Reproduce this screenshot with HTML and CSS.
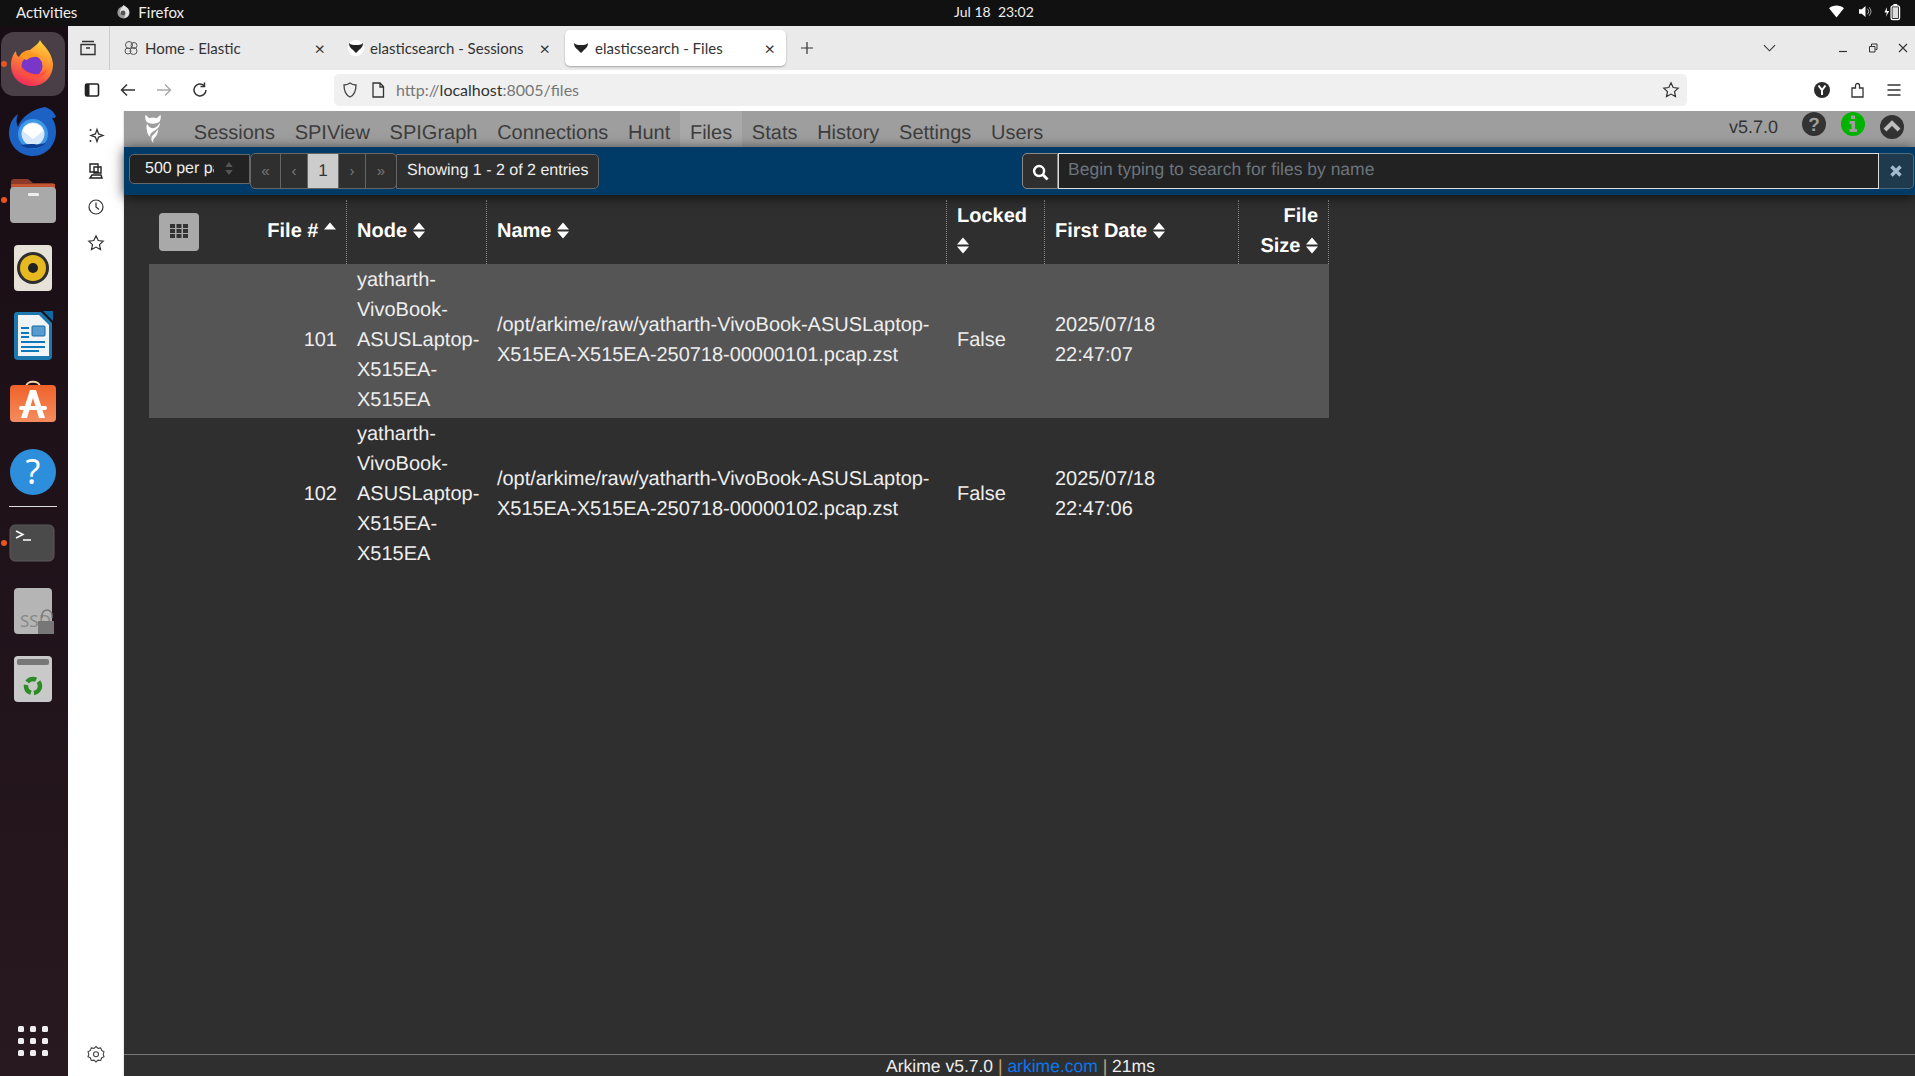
FILE: index.html
```html
<!DOCTYPE html>
<html lang="en">
<head>
<meta charset="utf-8">
<title>elasticsearch - Files</title>
<link rel="stylesheet" href="styles.css">
</head>
<body>
<header class="topbar">
  <span class="activities">Activities</span>
  <span class="appname">
    <svg class="appname-icon" viewBox="0 0 16 16"><circle cx="8" cy="9" r="6.5" fill="#9a9a9a"/><path d="M8 1c3 2 6 4 6 8a6 6 0 0 1-6 6c2-2 3-4 1-6-2-1-4 0-5 1 0-4 2-6 4-9z" fill="#e4e4e4"/><circle cx="7.5" cy="9.5" r="2.6" fill="#555"/></svg>
    Firefox
  </span>
  <span class="clock">Jul 18&nbsp; 23:02</span>
  <span class="status">
    <svg class="st-wifi" viewBox="0 0 16 14"><path d="M0 3.5C2 1.5 5 .5 8 .5s6 1 8 3L8 13.5z" fill="#fff"/></svg>
    <svg class="st-vol" viewBox="0 0 16 14"><path d="M1 4.5h3L8 1v12L4 9.500H1z" fill="#fff"/><path d="M10 4a4 4 0 0 1 0 6M12 2.500a7 7 0 0 1 0 9" fill="none" stroke="#bbb" stroke-width="1"/></svg>
    <svg class="st-bat" viewBox="0 0 18 18"><path d="M3 4 .5 9.500H3L2 14l3.500-6H3z" fill="#fff"/><rect x="7.500" y="2.500" width="9" height="14.500" rx="2" fill="none" stroke="#fff" stroke-width="1.300"/><rect x="10" y=".5" width="4" height="2" fill="#fff"/><rect x="9" y="4" width="6" height="11.500" fill="#ddd"/></svg>
  </span>
</header>

<div class="desktop">
  <nav class="dock">
    <div class="slot">
      <span class="run-dot"></span>
      <div class="tile">
        <svg class="ico-52" viewBox="0 2 52 52">
          <defs><linearGradient id="ffa" x1="0.7" y1="0" x2="0.3" y2="1"><stop offset="0" stop-color="#ffd43a"/><stop offset=".45" stop-color="#ff8a2f"/><stop offset="1" stop-color="#f0265e"/></linearGradient></defs>
          <path d="M33 4c2 5 12 11 13 24 0 13-9 22-21 22C13 50 4 41 4 29c0-6 2-11 5-14 0 3 1 5 3 6 2-4 6-7 11-7 3-3 8-5 10-10z" fill="url(#ffa)"/>
          <circle cx="25" cy="30" r="10.500" fill="#7a35c9"/>
          <path d="M14 18c6-3 15-2 20 3-5-1-12 0-14 3-3 0-5-3-6-6z" fill="#ff9a1f"/>
          <path d="M14 30c0 8 5 13 12 13 6 0 11-3 14-10-3 4-8 6-13 5-6-1-10-4-13-8z" fill="#ff4f3e"/>
        </svg>
      </div>
    </div>
    <div class="slot">
      <svg class="ico-52" viewBox="0 1 52 52">
        <path d="M38 2c5 2 9 4 11 10-1 1-3 1-4 1 3 4 4 9 4 14 0 13-10 24-23 24S2 41 2 28c0-8 3-15 9-19-2 5-2 9 0 13C14 12 26 4 38 2z" fill="#1c62c4"/>
        <circle cx="26" cy="29" r="15" fill="#3f97e8"/>
        <circle cx="26" cy="29" r="11.500" fill="#d8e8fa"/>
        <path d="M16 26l10 8 10-8v-1a11 11 0 0 0-20 0z" fill="#fff"/>
        <path d="M14 40c6 5 18 5 25-2-5 1-9 2-12 1-5 0-9 0-13 1z" fill="#0d3f95"/>
      </svg>
    </div>
    <div class="slot">
      <span class="run-dot"></span>
      <svg class="ico-52" viewBox="0 0 52 52">
        <path d="M4 8a3 3 0 0 1 3-3h14l5 4h19a3 3 0 0 1 3 3v20H4z" fill="#8e3a2b"/>
        <rect x="4" y="10" width="44" height="4" fill="#c2552f"/>
        <rect x="3" y="13" width="46" height="36" rx="4" fill="#a9a9a9"/>
        <rect x="21" y="19" width="11" height="3" rx="1" fill="#eee"/>
      </svg>
    </div>
    <div class="slot">
      <svg class="ico-52" viewBox="0 0 52 52">
        <rect x="7" y="3" width="38" height="46" rx="4" fill="#e6e2d7"/>
        <circle cx="26" cy="26" r="16" fill="#2e2e2e"/>
        <circle cx="26" cy="26" r="13" fill="#e7b921"/>
        <circle cx="26" cy="26" r="5" fill="#222"/>
      </svg>
    </div>
    <div class="slot">
      <svg class="ico-52" viewBox="0 0 52 52">
        <path d="M10 2h24l11 11v33a4 4 0 0 1-4 4H11a4 4 0 0 1-4-4V5a3 3 0 0 1 3-3z" fill="#1d78b0"/>
        <path d="M36 1h10v10z" fill="#0f6aa4"/>
        <path d="M11 5h21l10 10v31H11z" fill="#f1f4f6"/>
        <path d="M14 17h8v2h-8zM14 22h8v2h-8zM14 26h8v2h-8zM14 31h24v2H14zM14 36h24v2H14zM14 40h18v2H14z" fill="#0f78bd"/>
        <rect x="25" y="16" width="13" height="10" rx="1" fill="#5a9bcf" stroke="#0f6aa4"/>
      </svg>
    </div>
    <div class="slot">
      <svg class="ico-52" viewBox="0 -1 52 52">
        <defs><linearGradient id="bag" x1="0" y1="0" x2="0" y2="1"><stop offset="0" stop-color="#f0622a"/><stop offset="1" stop-color="#f58c5e"/></linearGradient></defs>
        <path d="M19 8c0-7 14-7 14 0" fill="none" stroke="#f4d5a7" stroke-width="2"/>
        <rect x="3" y="6" width="46" height="37" rx="4" fill="url(#bag)"/>
        <path d="M23 11h6l9 28h-6l-6-20-6 20h-6z" fill="#fff"/>
        <rect x="12" y="27" width="28" height="4" rx="2" fill="#fff"/>
      </svg>
    </div>
    <div class="slot">
      <svg class="ico-52" viewBox="0 0 52 52">
        <circle cx="26" cy="26" r="23" fill="#2d8fdc"/>
        <text x="26" y="38" class="help-q">?</text>
      </svg>
    </div>
    <div class="dock-sep"></div>
    <div class="slot">
      <span class="run-dot"></span>
      <svg class="ico-52" viewBox="0 0 52 52">
        <rect x="3" y="8" width="44" height="36" rx="5" fill="#4a4a4a" stroke="#5a5a5a"/>
        <path d="M9 14l7 3.500-7 3.500M16 23h8" fill="none" stroke="#fff" stroke-width="1.500"/>
      </svg>
    </div>
    <div class="slot">
      <svg class="ico-52" viewBox="0 0 52 52">
        <rect x="7" y="3" width="38" height="46" rx="4" fill="#b5b5b5"/>
        <text x="13" y="42" class="ssd-label">SSD</text>
        <path d="M35 33v-3a5 5 0 0 1 10 0v3" fill="none" stroke="#777" stroke-width="1.500"/>
        <rect x="31" y="36" width="16" height="13" fill="#777"/>
      </svg>
    </div>
    <div class="slot">
      <svg class="ico-52" viewBox="0 0 52 52">
        <rect x="7" y="3" width="38" height="46" rx="4" fill="#c9c9c9"/>
        <rect x="10" y="6" width="32" height="6" rx="2" fill="#777"/>
        <circle cx="26" cy="33" r="7" fill="none" stroke="#2a8c22" stroke-width="4.500" stroke-dasharray="10 3"/>
      </svg>
    </div>
    <div class="app-grid">
      <i></i><i></i><i></i><i></i><i></i><i></i><i></i><i></i><i></i>
    </div>
  </nav>

  <div class="window">
    <div class="tabstrip">
      <span class="tb-icon tab-manager">
        <svg viewBox="0 0 18 18" class="ico-18"><path d="M3 2.500h12M2 5.500h14v10H2zM7 9h4" fill="none" stroke="#333" stroke-width="1.400"/></svg>
      </span>
      <span class="tabstrip-sep"></span>
      <div class="tab">
        <svg class="fav" viewBox="0 0 16 16"><g fill="none" stroke="#555" stroke-width="1"><circle cx="6" cy="5" r="3.500"/><circle cx="11" cy="5.500" r="3"/><circle cx="5" cy="11" r="3"/><circle cx="10.500" cy="11" r="3.500"/></g></svg>
        <span class="tab-title">Home - Elastic</span>
        <span class="tab-x">×</span>
      </div>
      <div class="tab">
        <svg class="fav" viewBox="0 0 16 16"><circle cx="8" cy="8" r="8" fill="#fff"/><path d="M1 3c2 2 4 2 7 2s5 0 7-2c0 4-2 5-4 7l-3 3-3-3C3 8 1 7 1 3z" fill="#222"/></svg>
        <span class="tab-title">elasticsearch - Sessions</span>
        <span class="tab-x">×</span>
      </div>
      <div class="tab tab-active">
        <svg class="fav" viewBox="0 0 16 16"><path d="M1 3c2 2 4 2 7 2s5 0 7-2c0 4-2 5-4 7l-3 3-3-3C3 8 1 7 1 3z" fill="#222"/></svg>
        <span class="tab-title">elasticsearch - Files</span>
        <span class="tab-x">×</span>
      </div>
      <svg class="new-tab" viewBox="0 0 14 14"><path d="M7 1v12M1 7h12" stroke="#333" stroke-width="1.200"/></svg>
      <div class="strip-right">
        <svg class="strip-chev" viewBox="0 0 14 8"><path d="M1 1l6 6 6-6" fill="none" stroke="#333" stroke-width="1.200"/></svg>
        <svg class="win-btn" viewBox="0 0 10 10"><path d="M1 8.500h8" stroke="#333" stroke-width="1.200"/></svg>
        <svg class="win-btn" viewBox="0 0 10 10"><path d="M1.500 3.500h5.500V9H1.500zM3.500 3V1H9v5.500H7.500" fill="none" stroke="#333"/></svg>
        <svg class="win-btn" viewBox="0 0 10 10"><path d="M1 1l8 8M9 1l-8 8" stroke="#333" stroke-width="1.100"/></svg>
      </div>
    </div>

    <div class="toolbar">
      <svg class="ico-18 tool tool-first" viewBox="0 0 18 18"><rect x="2.500" y="3" width="13" height="12" rx="1.500" fill="none" stroke="#222" stroke-width="1.600"/><rect x="2.500" y="3" width="4" height="12" fill="#222"/></svg>
      <svg class="ico-18 tool" viewBox="0 0 18 18"><path d="M16 9H3M8 3.500 2.500 9 8 14.500" fill="none" stroke="#333" stroke-width="1.500"/></svg>
      <svg class="ico-18 tool" viewBox="0 0 18 18"><path d="M2 9h13M10 3.500 15.500 9 10 14.500" fill="none" stroke="#aaa" stroke-width="1.500"/></svg>
      <svg class="ico-18 tool" viewBox="0 0 18 18"><path d="M15 9a6 6 0 1 1-2-4.500M13.500 1.500v4h-4" fill="none" stroke="#333" stroke-width="1.500"/></svg>
      <div class="urlbar">
        <svg class="ico-18 url-shield" viewBox="0 0 18 18"><path d="M9 2c2 1.500 4 2 6 2 0 6-1.500 10-6 12C4.500 14 3 10 3 4c2 0 4-.5 6-2z" fill="none" stroke="#444" stroke-width="1.300"/></svg>
        <svg class="url-page" viewBox="0 0 14 16"><path d="M2 1h7l3.500 3.500V15H2zM9 1v4h3.500" fill="none" stroke="#333" stroke-width="1.300"/></svg>
        <span class="url-text">http://<b>localhost</b>:8005/files</span>
        <svg class="ico-18 url-star" viewBox="0 0 18 18"><path d="M9 1.800l2.200 4.700 5 .6-3.700 3.500 1 5L9 13.100l-4.500 2.500 1-5L1.800 7.100l5-.6z" fill="none" stroke="#333" stroke-width="1.200"/></svg>
      </div>
      <div class="tool-right">
        <svg class="ico-18" viewBox="0 0 18 18"><circle cx="9" cy="9" r="8" fill="#2b2b2b"/><path d="M5.500 4.500 9 9l3.500-4.500M9 9v5" fill="none" stroke="#fff" stroke-width="2"/></svg>
        <svg class="ico-18" viewBox="0 0 18 18"><path d="M3 16V7h3.500V4.500a2 2 0 0 1 4 0V7H14v3.500a2 2 0 0 1 0 1.500V16z" fill="none" stroke="#333" stroke-width="1.300"/></svg>
        <svg class="ico-18" viewBox="0 0 18 18"><path d="M2.500 4h13M2.500 9h13M2.500 14h13" stroke="#333" stroke-width="1.300"/></svg>
      </div>
    </div>

    <div class="browser-body">
      <aside class="sidebar">
        <svg class="ico-18 side-ico" viewBox="0 0 18 18"><path d="M10 3.500l1.600 4.400 4.400 1.600-4.400 1.600L10 15.500l-1.600-4.400L4 9.500l4.400-1.600z" fill="none" stroke="#333" stroke-width="1.300"/><circle cx="3.500" cy="4" r="1" fill="#333"/><circle cx="3.500" cy="15" r="1" fill="#333"/></svg>
        <svg class="ico-18 side-ico" viewBox="0 0 18 18"><path d="M3 2h8v8H3zM7 5h7v6H7zM5 13h9l1 3H3z" fill="none" stroke="#222" stroke-width="1.400"/></svg>
        <svg class="ico-18 side-ico" viewBox="0 0 18 18"><circle cx="9" cy="9" r="7" fill="none" stroke="#333" stroke-width="1.200"/><path d="M9 4.500V9l3 2.500" fill="none" stroke="#333" stroke-width="1.200"/></svg>
        <svg class="ico-18 side-ico" viewBox="0 0 18 18"><path d="M9 1.800l2.200 4.700 5 .6-3.700 3.500 1 5L9 13.100l-4.500 2.500 1-5L1.800 7.100l5-.6z" fill="none" stroke="#333" stroke-width="1.200"/></svg>
        <svg class="ico-18 side-ico side-gear" viewBox="0 0 18 18"><path d="M9 1.500l2 1.800 2.700-.4.900 2.500 2.400 1.300-.8 2.500.8 2.500-2.400 1.300-.9 2.500-2.700-.4-2 1.800-2-1.800-2.700.4-.9-2.500L1 11.700l.8-2.500L1 6.700l2.400-1.300.9-2.500 2.700.4z" fill="none" stroke="#444" stroke-width="1.100"/><circle cx="9" cy="9.200" r="2.500" fill="none" stroke="#444" stroke-width="1.100"/></svg>
      </aside>

      <main class="app">
        <div class="navbar">
          <svg class="logo" viewBox="0 0 24 40">
            <path d="M2 1l5 4.500c3-1 7-1 10 0L22 1c1 4 0 8-2 10-4 2.500-12 2.500-16 0C2 9 1 5 2 1z" fill="#fff"/>
            <path d="M4 13c2 4 5 6 8 6s7-3 9-7c1 4-3 8-8 11-4 2-6 5-4 8-3-2-5-5-5-9-1-3-1-6 0-9z" fill="#fff"/>
            <path d="M19 20c0 6-3 10-6 13-1 2-1 4 0 6-3-2-4-5-3-8 1-3 6-6 9-11z" fill="#fff"/>
          </svg>
          <a class="nav-link">Sessions</a>
          <a class="nav-link">SPIView</a>
          <a class="nav-link">SPIGraph</a>
          <a class="nav-link">Connections</a>
          <a class="nav-link">Hunt</a>
          <a class="nav-link nav-active">Files</a>
          <a class="nav-link">Stats</a>
          <a class="nav-link">History</a>
          <a class="nav-link">Settings</a>
          <a class="nav-link">Users</a>
          <div class="nav-right">
            <span class="version">v5.7.0</span>
            <svg class="nav-ico nav-ico-help" viewBox="0 0 24 24"><circle cx="12" cy="12" r="12" fill="#333"/><text x="12" y="18.500" class="nav-q">?</text></svg>
            <svg class="nav-ico nav-ico-info" viewBox="0 0 24 24"><circle cx="12" cy="12" r="12" fill="#00b300"/><path d="M10 3.500h4v3.500h-4zM8.500 9h5.500v8h2v3H8.500v-3h2v-5h-2z" fill="#9e9e9e"/></svg>
            <svg class="nav-ico nav-ico-up" viewBox="0 0 24 24"><circle cx="12" cy="12" r="12" fill="#333"/><path d="M5 15l7-7 7 7" fill="none" stroke="#bdbdbd" stroke-width="4"/></svg>
          </div>
        </div>

        <div class="subbar">
          <div class="per-page">
            <span class="per-page-text">500 per page</span>
            <svg class="per-page-arrows" viewBox="0 0 10 16"><path d="M5 1l4 5.500H1zM5 15 1 9.500h8z" fill="#555"/></svg>
          </div>
          <div class="pager">
            <span class="pg pg-w1">«</span>
            <span class="pg pg-w2">‹</span>
            <span class="pg pg-on">1</span>
            <span class="pg pg-w2">›</span>
            <span class="pg pg-w1">»</span>
          </div>
          <div class="showing">Showing 1 - 2 of 2 entries</div>
          <div class="search">
            <span class="search-btn"><svg class="search-ico" viewBox="0 0 18 18"><circle cx="7.500" cy="7.500" r="5.300" fill="none" stroke="#fff" stroke-width="2.600"/><path d="M11.500 11.500l5 5" stroke="#fff" stroke-width="3"/></svg></span>
            <span class="search-input">Begin typing to search for files by name</span>
            <span class="search-clear"><svg class="clear-ico" viewBox="0 0 14 14"><path d="M2.500 2.500l9 9M11.500 2.500l-9 9" stroke="#a3bccd" stroke-width="3.400"/></svg></span>
          </div>
        </div>

        <div class="content">
          <table class="files">
            <colgroup>
              <col class="c-num"><col class="c-node"><col class="c-name"><col class="c-lock"><col class="c-date"><col class="c-size">
            </colgroup>
            <thead>
              <tr>
                <th class="right">
                  <div class="first-head">
                    <span class="grid-btn"><svg class="grid-ico" viewBox="0 0 18 14"><path d="M0 0h5v4H0zM6.500 0h5v4h-5zM13 0h5v4h-5zM0 5h5v4H0zM6.500 5h5v4h-5zM13 5h5v4h-5zM0 10h5v4H0zM6.500 10h5v4h-5zM13 10h5v4h-5z" fill="#333"/></svg></span>
                    <span>File # <svg class="sort" viewBox="0 0 12 17"><path d="M6 .5l6 7H0z" fill="#fff"/></svg></span>
                  </div>
                </th>
                <th>Node <svg class="sort" viewBox="0 0 12 17"><path d="M6 .5l6 7H0zM6 16.500l-6-7h12z" fill="#fff"/></svg></th>
                <th>Name <svg class="sort" viewBox="0 0 12 17"><path d="M6 .5l6 7H0zM6 16.500l-6-7h12z" fill="#fff"/></svg></th>
                <th>Locked <svg class="sort" viewBox="0 0 12 17"><path d="M6 .5l6 7H0zM6 16.500l-6-7h12z" fill="#fff"/></svg></th>
                <th>First Date <svg class="sort" viewBox="0 0 12 17"><path d="M6 .5l6 7H0zM6 16.500l-6-7h12z" fill="#fff"/></svg></th>
                <th class="right">File Size <svg class="sort" viewBox="0 0 12 17"><path d="M6 .5l6 7H0zM6 16.500l-6-7h12z" fill="#fff"/></svg></th>
              </tr>
            </thead>
            <tbody>
              <tr class="row-hl">
                <td class="right">101</td>
                <td>yatharth-VivoBook-ASUSLaptop-X515EA-X515EA</td>
                <td class="path">/opt/arkime/raw/yatharth-VivoBook-ASUSLaptop-X515EA-X515EA-250718-00000101.pcap.zst</td>
                <td>False</td>
                <td>2025/07/18 22:47:07</td>
                <td></td>
              </tr>
              <tr>
                <td class="right">102</td>
                <td>yatharth-VivoBook-ASUSLaptop-X515EA-X515EA</td>
                <td class="path">/opt/arkime/raw/yatharth-VivoBook-ASUSLaptop-X515EA-X515EA-250718-00000102.pcap.zst</td>
                <td>False</td>
                <td>2025/07/18 22:47:06</td>
                <td></td>
              </tr>
            </tbody>
          </table>
        </div>

        <footer class="footer">Arkime v5.7.0 <span class="foot-bar">|</span> <a class="foot-link">arkime.com</a> <span class="foot-bar">|</span> 21ms</footer>
      </main>
    </div>
  </div>
</div>
</body>
</html>
```

FILE: styles.css
```css
* { box-sizing: border-box; }
html, body { margin: 0; padding: 0; height: 100%; overflow: hidden; }
body { width: 1915px; height: 1076px; display: flex; flex-direction: column; font-family: "Liberation Sans", Arial, sans-serif; background: #2f2f2f; }

/* GNOME top bar */
.topbar { height: 26px; flex: none; background: #111; color: #eee; display: flex; align-items: center; font-family: Lato, "Noto Sans", sans-serif; font-size: 15px; padding-bottom: 3px; }
.activities { margin-left: 16px; }
.appname { margin-left: 39px; display: flex; align-items: center; gap: 7px; }
.appname-icon { width: 15px; height: 15px; }
.clock { margin-left: 770px; font-size: 14px; }
.status { margin-left: auto; display: flex; align-items: center; margin-right: 14px; }
.st-wifi { width: 15px; height: 13px; margin-right: 14px; }
.st-vol { width: 15px; height: 13px; margin-right: 11px; }
.st-bat { width: 17px; height: 18px; }

.desktop { flex: 1; display: flex; min-height: 0; }

/* Dock */
.dock { width: 68px; flex: none; background: linear-gradient(#180d14, #281820); display: flex; flex-direction: column; align-items: center; padding-top: 4px; padding-bottom: 20px; }
.slot { width: 68px; height: 68px; flex: none; display: flex; align-items: center; justify-content: center; padding-right: 2px; position: relative; }
.tile { width: 64px; height: 64px; border-radius: 13px; background: #4a3f46; display: flex; align-items: center; justify-content: center; }
.ico-52 { width: 52px; height: 52px; }
.run-dot { position: absolute; left: 1px; top: 31px; width: 6px; height: 6px; border-radius: 50%; background: #e95420; }
.dock-sep { width: 48px; height: 1px; background: #ddd; margin: 0 2px 2px 0; flex: none; }
.help-q { font-family: "Noto Sans", sans-serif; font-size: 34px; fill: #fff; text-anchor: middle; }
.ssd-label { font-family: "Noto Sans", sans-serif; font-size: 17px; fill: #888; }
.app-grid { margin: auto 2px 0 0; display: grid; grid-template-columns: repeat(3, 6px); gap: 6px; }
.app-grid i { width: 6px; height: 6px; border-radius: 1.500px; background: #eee; }

.window { flex: 1; min-width: 0; display: flex; flex-direction: column; }

/* Tabs */
.tabstrip { height: 44px; flex: none; background: #eaeaea; display: flex; align-items: center; font-family: Lato, "Noto Sans", sans-serif; font-size: 15px; color: #333; }
.tb-icon { width: 41px; display: flex; justify-content: center; padding-right: 1px; }
.ico-18 { width: 18px; height: 18px; flex: none; display: block; }
.tabstrip-sep { width: 1px; height: 44px; background: #ccc; margin-right: 5px; }
.tab { width: 221px; height: 36px; display: flex; align-items: center; padding: 0 11px 0 8px; margin-right: 4px; border-radius: 5px; }
.tab-active { background: #fff; box-shadow: 0 1px 2px rgba(0,0,0,.3); }
.fav { width: 16px; height: 16px; flex: none; margin-right: 6px; }
.tab-title { flex: 1; white-space: nowrap; overflow: hidden; }
.tab-x { font-size: 18px; line-height: 18px; color: #333; }
.new-tab { width: 14px; height: 14px; margin-left: 10px; }
.strip-right { margin-left: auto; display: flex; align-items: center; }
.strip-chev { width: 13px; height: 8px; margin-right: 62px; }
.win-btn { width: 10px; height: 10px; margin-right: 20px; }
.win-btn:last-child { margin-right: 7px; }

/* Toolbar */
.toolbar { height: 41px; flex: none; background: #fff; display: flex; align-items: center; padding-bottom: 1px; }
.tool { margin-right: 18px; }
.tool-first { margin-left: 15px; }
.urlbar { width: 1353px; height: 32px; margin-left: 107px; background: #f0f0f0; border-radius: 5px; display: flex; align-items: center; font-family: Lato, "Noto Sans", sans-serif; font-size: 16px; color: #777; }
.url-shield { margin-left: 7px; }
.url-page { width: 14px; height: 16px; margin-left: 12px; }
.url-text { margin-left: 11px; padding-bottom: 1px; }
.url-text b { font-weight: 400; color: #333; }
.url-star { margin-left: auto; margin-right: 7px; }
.tool-right { display: flex; gap: 18px; margin-left: 126px; }

.browser-body { flex: 1; display: flex; min-height: 0; }

/* Firefox sidebar */
.sidebar { width: 56px; flex: none; background: #fff; display: flex; flex-direction: column; align-items: center; padding: 15px 0 13px; gap: 18px; box-shadow: inset -2px 0 2px -1px rgba(0,0,0,.1); }
.side-gear { margin-top: auto; }

/* Arkime */
.app { flex: 1; min-width: 0; display: flex; flex-direction: column; background: #2f2f2f; color: #eee; text-rendering: geometricPrecision; }
.navbar { height: 36px; flex: none; background: #9e9e9e; display: flex; font-size: 20px; color: #3d3d3d; }
.logo { width: 18px; height: 32px; margin: 2px 22px 0 20px; flex: none; }
.nav-link { padding: 8px 9.850px 0; height: 36px; line-height: 28px; }
.nav-active { background: #a9a9a9; }
.nav-right { margin-left: auto; display: flex; color: #333; padding-right: 11px; }
.version { font-size: 18px; margin-top: 4px; margin-right: 24px; line-height: 24px; }
.nav-ico { width: 24px; height: 24px; margin-left: 15px; margin-top: 1px; }
.nav-ico-help { margin-left: 0; }
.nav-ico-up { margin-top: 4px; }
.nav-q { font-family: "Liberation Sans", sans-serif; font-weight: 700; font-size: 19px; fill: #9e9e9e; text-anchor: middle; }

.subbar { height: 48px; flex: none; background: #003a66; display: flex; align-items: center; padding: 0 1px 0 5px; font-size: 16px; box-shadow: 0 2px 12px rgba(0,0,0,.7); position: relative; }
.per-page { width: 121px; height: 30px; background: #222; border: 1px solid #666; border-radius: 5px 0 0 5px; display: flex; align-items: center; padding-left: 15px; margin-top: -5px; }
.per-page-text { width: 69px; overflow: hidden; white-space: nowrap; color: #eee; }
.per-page-arrows { width: 10px; height: 15px; margin-left: 10px; }
.pager { display: flex; height: 36px; border: 1px solid #666; border-radius: 5px; background: #2f2f2f; overflow: hidden; }
.pg { display: flex; align-items: center; justify-content: center; color: #777; border-right: 1px solid #666; font-size: 15px; }
.pg:last-child { border-right: 0; }
.pg-w1 { width: 30px; }
.pg-w2 { width: 27px; }
.pg-on { width: 31px; background: #ccc; color: #333; font-size: 17px; }
.showing { height: 35px; line-height: 31px; padding: 0 10px; width: 203px; white-space: nowrap; background: #2f2f2f; border: 1px solid #666; border-radius: 0 5px 5px 0; color: #eee; margin-left: -1px; }
.search { margin-left: auto; display: flex; height: 36px; width: 892px; }
.search-btn { width: 36px; background: #2f2f2f; border: 1px solid #888; border-radius: 5px 0 0 5px; display: flex; align-items: center; justify-content: center; }
.search-ico { width: 17px; height: 17px; margin-top: 2px; }
.search-input { flex: 1; background: #222; border: 1px solid #ddd; padding-left: 9px; line-height: 30px; font-size: 17.500px; color: #6c757d; }
.search-clear { width: 35px; background: #1f3a4d; border: 1px solid #4d6a7d; border-left: 0; border-radius: 0 5px 5px 0; display: flex; align-items: center; justify-content: center; }
.clear-ico { width: 14px; height: 14px; }

.content { flex: 1; min-height: 0; padding: 5px 0 0 25px; }
.files { width: 1180px; table-layout: fixed; border-collapse: separate; border-spacing: 0; font-size: 20px; line-height: 30px; color: #eee; }
.c-num { width: 198px; } .c-node { width: 140px; } .c-name { width: 460px; } .c-lock { width: 98px; } .c-date { width: 194px; } .c-size { width: 90px; }
.files th { padding: 1px 10px 3px; text-align: left; font-weight: 700; color: #fff; vertical-align: middle; border-right: 1px dotted #888; }
.files td { padding: 1px 10px 3px; vertical-align: middle; }
.files .right { text-align: right; }
.files .path { letter-spacing: -.04px; }
.first-head { display: flex; justify-content: space-between; align-items: center; }
.grid-btn { width: 40px; height: 38px; background: #a9a9a9; border-radius: 4px; display: flex; align-items: center; justify-content: center; margin-top: 2px; }
.grid-ico { width: 18px; height: 14px; margin-bottom: 2px; }
.sort { width: 12px; height: 17px; display: inline-block; vertical-align: -2px; }
.row-hl { background: #555; }

.footer { height: 22px; flex: none; border-top: 1px solid #777; text-align: center; font-size: 17.500px; line-height: 22px; color: #eee; padding-left: 2px; }
.foot-link { color: #0b76ef; }
.foot-bar { color: #c6a27a; }
```
